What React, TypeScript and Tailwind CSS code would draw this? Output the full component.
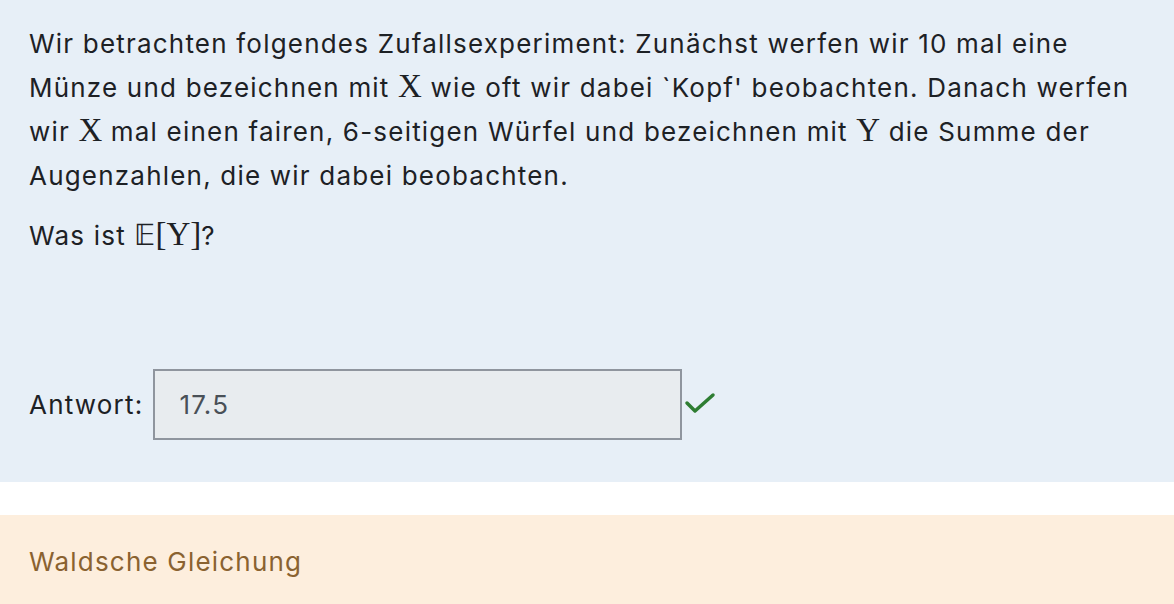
export default function App() {
  const mathCls = "font-['Liberation_Serif','DejaVu_Serif',serif] text-[33px] leading-none tracking-normal";

  return (
    <div className="min-h-screen bg-white font-['Inter','Noto_Sans',sans-serif] text-[26px] leading-[44px] tracking-[1.2px] text-[#1d2125]">
      {/* Formulation */}
      <div className="bg-[#e7eff7] pl-[29px] pr-[30px] pt-[22px] pb-[42px]">
        <p>
          Wir betrachten folgendes Zufallsexperiment: Zunächst werfen wir 10 mal eine Münze und
          bezeichnen mit <span className={mathCls}>X</span> wie oft wir dabei `Kopf' beobachten.
          Danach werfen wir <span className={mathCls}>X</span> mal einen fairen, 6-seitigen Würfel
          und bezeichnen mit <span className={mathCls}>Y</span> die Summe der Augenzahlen, die wir
          dabei beobachten.
        </p>
        <p className="mt-4">
          Was ist{" "}
          <span className="font-['DejaVu_Sans',sans-serif] text-[29px] font-light leading-none tracking-normal">𝔼</span>
          <span className={mathCls}>[Y]</span>?
        </p>

        <div className="mt-[111px] flex items-center">
          <span>Antwort:</span>
          <div className="ml-[10px] flex h-[71px] w-[529px] items-center border-2 border-[#8f959e] bg-[#e8ecef] pl-[24px] text-[#495057]">
            17.5
          </div>
          <svg className="ml-[2px] mb-[4px]" width="32" height="22" viewBox="0 0 32 22">
            <path d="M3 11 L11 19 L29 3" fill="none" stroke="#2e7d32" strokeWidth="3.5" strokeLinecap="round" strokeLinejoin="round" />
          </svg>
        </div>
      </div>

      {/* Outcome */}
      <div className="mt-[33px] bg-[#fdeedd] px-[29px] pt-[25px] pb-[30px] text-[#8a6230]">
        Waldsche Gleichung
      </div>
    </div>
  );
}
